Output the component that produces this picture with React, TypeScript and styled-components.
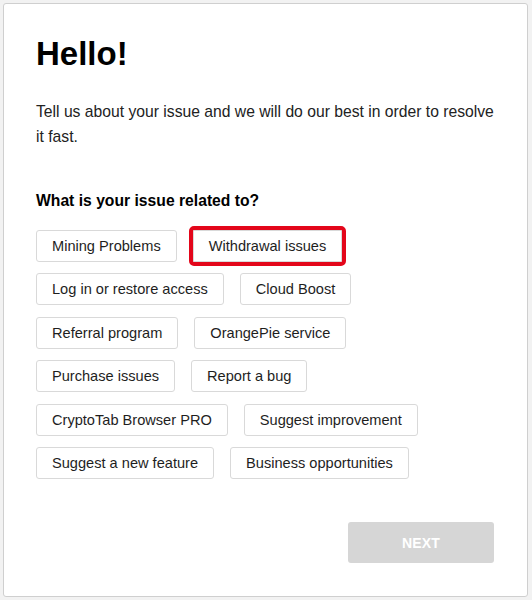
import React, { useState } from "react";
import styled, { createGlobalStyle } from "styled-components";

const GlobalStyle = createGlobalStyle`
  * {
    box-sizing: border-box;
  }
  body {
    margin: 0;
    background: #f2f2f2;
    font-family: "Liberation Sans", Arial, sans-serif;
    color: #222;
  }
`;

const Card = styled.div`
  margin: 3px 0 0 3px;
  width: 525px;
  height: 594px;
  background: #fff;
  border: 1px solid #cfcfcf;
  border-radius: 3px;
  padding: 31px 33px 33px 32px;
  display: flex;
  flex-direction: column;
`;

const Title = styled.h1`
  margin: 0;
  font-size: 33px;
  line-height: 38px;
  font-weight: 700;
  color: #000;
`;

const Intro = styled.p`
  margin: 26px 0 0;
  font-size: 15.7px;
  line-height: 25px;
  color: #222;
`;

const Question = styled.h2`
  margin: 43px 0 0;
  font-size: 15.7px;
  line-height: 18px;
  font-weight: 700;
  color: #000;
`;

const Options = styled.div`
  margin-top: 20px;
  display: flex;
  flex-wrap: wrap;
  gap: 11.4px 16px;
`;

const Option = styled.button<{ $selected: boolean }>`
  height: 32px;
  padding: 0 15px;
  border: 1px solid #d9d9d9;
  border-radius: ${(p) => (p.$selected ? "1px" : "3px")};
  background: #fff;
  font-family: inherit;
  font-size: 14.6px;
  line-height: 30px;
  color: #1e1e1e;
  cursor: pointer;
  outline: ${(p) => (p.$selected ? "4px solid #e3061a" : "none")};
  outline-offset: 0;
`;

const Footer = styled.div`
  margin-top: auto;
  display: flex;
  justify-content: flex-end;
`;

const NextButton = styled.button`
  width: 146px;
  height: 41px;
  border: none;
  border-radius: 3px;
  background: #d6d6d6;
  color: #fff;
  font-family: inherit;
  font-size: 14px;
  font-weight: 700;
  letter-spacing: 0.2px;
`;

const topics = [
  "Mining Problems",
  "Withdrawal issues",
  "Log in or restore access",
  "Cloud Boost",
  "Referral program",
  "OrangePie service",
  "Purchase issues",
  "Report a bug",
  "CryptoTab Browser PRO",
  "Suggest improvement",
  "Suggest a new feature",
  "Business opportunities",
];

export default function App() {
  const [selected, setSelected] = useState("Withdrawal issues");

  return (
    <>
      <GlobalStyle />
      <Card>
        <Title>Hello!</Title>
        <Intro>
          Tell us about your issue and we will do our best in order to resolve
          it fast.
        </Intro>
        <Question>What is your issue related to?</Question>
        <Options>
          {topics.map((t) => (
            <Option key={t} $selected={t === selected} onClick={() => setSelected(t)}>
              {t}
            </Option>
          ))}
        </Options>
        <Footer>
          <NextButton disabled>NEXT</NextButton>
        </Footer>
      </Card>
    </>
  );
}
